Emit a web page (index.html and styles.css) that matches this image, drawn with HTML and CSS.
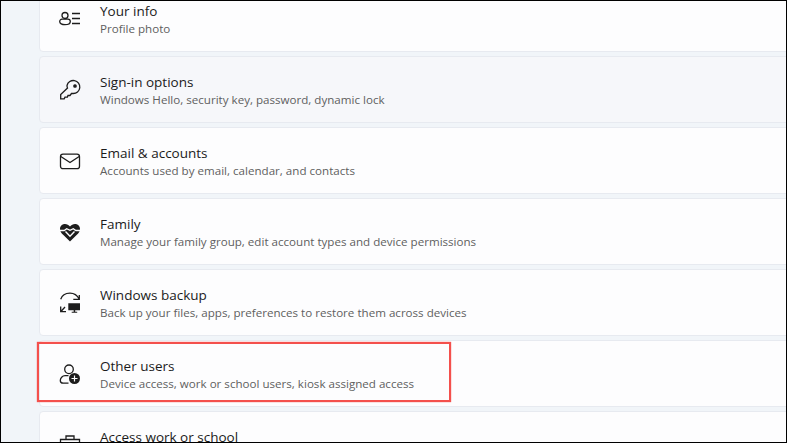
FILE: index.html
```html
<!DOCTYPE html>
<html>
	<head>
		<meta charset="utf-8" />
		<title>Accounts</title>
		<link rel="stylesheet" href="styles.css">
	</head>
	<body>
<div class="frame">
    <div class="list">
        <div class="card">
            <svg class="icon" viewBox="0 0 24 24"><circle cx="7" cy="8.500" r="3"/><path d="M4 12.200h6a2.300 2.300 0 0 1 2.300 2.300c0 2-2.200 3.200-5.300 3.200s-5.300-1.200-5.300-3.200a2.300 2.300 0 0 1 2.300-2.300z"/><path d="M14 6.500h8M14 11.500h8M14 16.500h8"/></svg>
            <div class="text"><div class="title">Your info</div><div class="sub">Profile photo</div></div>
        </div>
        <div class="card hover">
            <svg class="icon" viewBox="0 0 24 24"><path d="M9 7.500a6.500 6.500 0 1 1 6 8h-1.500l-1.500 2h-2l-.6 1.600H7l-.8 1.700H2.700v-4.300l6.800-6.500a6 6 0 0 1-.5-2.500z"/><circle class="fill" cx="17" cy="8" r="1.200"/></svg>
            <div class="text"><div class="title">Sign-in options</div><div class="sub">Windows Hello, security key, password, dynamic lock</div></div>
        </div>
        <div class="card">
            <svg class="icon" viewBox="0 0 24 24"><rect x="2.500" y="5.200" width="19" height="14.500" rx="2.500"/><path d="M2.800 7.500l9.200 6 9.200-6"/></svg>
            <div class="text"><div class="title">Email &amp; accounts</div><div class="sub">Accounts used by email, calendar, and contacts</div></div>
        </div>
        <div class="card">
            <svg class="icon" viewBox="0 0 24 24"><path class="fill nostroke" d="M7 4C4 4 2 6.200 2 9c0 2.400 1.400 4.200 3.400 6.100L12 21.500l6.600-6.400c2-1.900 3.400-3.700 3.400-6.100 0-2.800-2-5-5-5-2 0-3.700 1-5 2.600C10.700 5 9 4 7 4z"/><path class="cut" d="M1.500 10.500h4.700l2.500-1.800 3.300 1.600 3.300-1.600 2.500 1.800h4.700"/><path class="cut" d="M7.500 11.500l4.500 4.700 4.500-4.700"/></svg>
            <div class="text"><div class="title">Family</div><div class="sub">Manage your family group, edit account types and device permissions</div></div>
        </div>
        <div class="card">
            <svg class="icon" viewBox="0 0 24 24"><path d="M2.700 8.300C4 4.200 7.600 2.200 12 2.200c4 0 7.300 2.200 9.300 6.100M21.300 4v4.300h-6"/><path d="M7 16l-4.300 4.700M2.700 15.500v5.200H8"/><path class="fill nostroke" d="M10.300 12.300H22v7h-4.800v1.500h2v1h-5.500v-1h2v-1.500h-5.400z"/></svg>
            <div class="text"><div class="title">Windows backup</div><div class="sub">Back up your files, apps, preferences to restore them across devices</div></div>
        </div>
        <div class="card">
            <svg class="icon" viewBox="0 0 24 24"><circle cx="11" cy="7.300" r="4.300"/><path d="M10.500 21.200H5.200c-1.700 0-2.900-1.100-2.900-2.700 0-2.400 2-4.800 4.800-4.800h3.400"/><circle class="fill nostroke" cx="16.500" cy="16.500" r="5.500"/><path class="cut thin" d="M16.500 13.500v6M13.500 16.500h6"/></svg>
            <div class="text"><div class="title">Other users</div><div class="sub">Device access, work or school users, kiosk assigned access</div></div>
            <div class="mark"></div>
        </div>
        <div class="card">
            <svg class="icon" viewBox="0 0 24 24"><path d="M8 6.500V3h8v3.500M2.500 6.500h19v12h-19zM2.500 12.500h19"/></svg>
            <div class="text"><div class="title">Access work or school</div></div>
        </div>
    </div>
</div>
	</body>
</html>
```

FILE: styles.css
```css
* {
    margin: 0;
    padding: 0;
    box-sizing: border-box;
}
html, body {
    height: 100%;
    overflow: hidden;
}
.frame {
    height: 443px;
    border: 1px solid #000;
    background: #f1f5f9;
    overflow: hidden;
    font-family: "Open Sans", "Noto Sans", sans-serif;
}
.list {
    display: flex;
    flex-direction: column;
    gap: 4px;
    margin-top: -16px;
    padding-left: 38px;
    margin-right: -10px;
}
.card {
    position: relative;
    flex: none;
    display: flex;
    align-items: center;
    gap: 18px;
    height: 67px;
    padding-left: 18px;
    background: #fdfdfe;
    border: 1px solid #e7eaf0;
    border-radius: 4px;
}
.hover {
    background: #f6f7fa;
}
.icon {
    flex: none;
    width: 24px;
    height: 24px;
    fill: none;
    stroke: #1d1d1d;
    stroke-width: 1.3;
}
.icon .fill {
    fill: #1d1d1d;
}
.icon .nostroke {
    stroke: none;
}
.icon .cut {
    stroke: #fdfdfe;
    stroke-width: 1.4;
}
.icon .thin {
    stroke-width: 1.2;
}
.text {
    padding-top: 2px;
}
.card:last-child .text {
    align-self: flex-start;
    padding-top: 16px;
}
.title {
    font-size: 13.5px;
    line-height: 18px;
    color: #1b1b1b;
}
.sub {
    font-size: 11.6px;
    line-height: 18px;
    color: #5f5f5f;
}
.mark {
    position: absolute;
    left: -3px;
    top: 1px;
    width: 414px;
    height: 60px;
    border: 2px solid #f4504c;
    box-shadow: 0 0 1px #f4504c;
}
```
